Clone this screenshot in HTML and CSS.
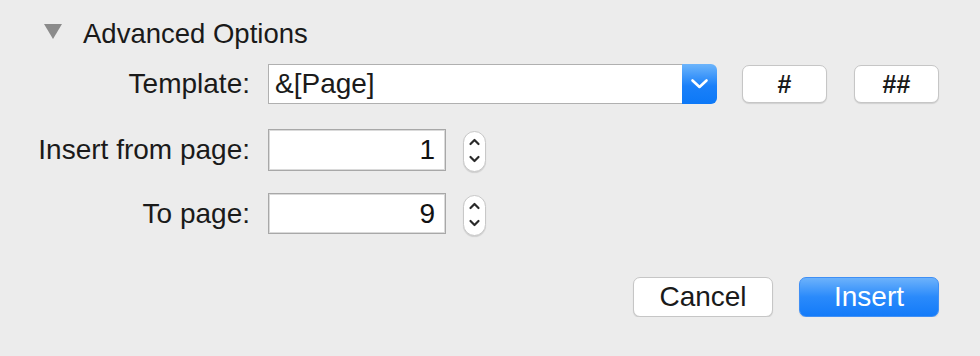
FILE: index.html
```html
<!DOCTYPE html>
<html lang="en">
<head>
    <meta charset="UTF-8" />
    <title>Insert Page Numbers</title>
    <link rel="stylesheet" href="styles.css">
</head>
<body>
    <div class="panel">
        <div class="disclosure">
            <span class="triangle"></span>
            <span class="disclosure-title">Advanced Options</span>
        </div>

        <div class="row row-template">
            <label class="field-label">Template:</label>
            <div class="combo">
                <span class="combo-value">&amp;[Page]</span>
                <span class="combo-arrow">
                    <svg width="35" height="40" viewBox="0 0 35 40"><path d="M10.5 16.5 L17.5 23 L24.5 16.5" fill="none" stroke="#fff" stroke-width="2.6" stroke-linecap="round" stroke-linejoin="round"/></svg>
                </span>
            </div>
            <button class="btn btn-token">#</button>
            <button class="btn btn-token btn-token-last">##</button>
        </div>

        <div class="row row-from">
            <label class="field-label">Insert from page:</label>
            <div class="number-field">1</div>
            <div class="stepper">
                <svg width="23" height="41" viewBox="0 0 23 41"><path d="M7.5 13 L11.5 9 L15.5 13 M7.5 26 L11.5 30 L15.5 26" fill="none" stroke="#2a2a2a" stroke-width="2.2" stroke-linecap="round" stroke-linejoin="round"/></svg>
            </div>
        </div>

        <div class="row row-to">
            <label class="field-label">To page:</label>
            <div class="number-field">9</div>
            <div class="stepper">
                <svg width="23" height="41" viewBox="0 0 23 41"><path d="M7.5 13 L11.5 9 L15.5 13 M7.5 26 L11.5 30 L15.5 26" fill="none" stroke="#2a2a2a" stroke-width="2.2" stroke-linecap="round" stroke-linejoin="round"/></svg>
            </div>
        </div>

        <div class="actions">
            <button class="btn btn-action">Cancel</button>
            <button class="btn btn-action btn-primary">Insert</button>
        </div>
    </div>
</body>
</html>
```

FILE: styles.css
```css
body {
    margin: 0;
    background: #ececec;
    font-family: "Liberation Sans", Arial, sans-serif;
    font-size: 28px;
    color: #1a1a1a;
}
.panel {
    padding: 19px 41px 0 0;
}
.disclosure {
    display: flex;
    align-items: flex-start;
    height: 30px;
    line-height: 30px;
}
.triangle {
    width: 0;
    height: 0;
    margin: 5px 0 0 44px;
    border-left: 9px solid transparent;
    border-right: 9px solid transparent;
    border-top: 15px solid #8b8b8b;
}
.disclosure-title {
    margin-left: 21px;
    font-size: 27.5px;
}
.row {
    display: flex;
    align-items: center;
}
.row-template {
    margin-top: 15px;
    height: 40px;
}
.row-from {
    margin-top: 25px;
    height: 42px;
}
.row-to {
    margin-top: 22px;
    height: 41px;
}
.field-label {
    width: 250px;
    margin-right: 18px;
    text-align: right;
}
.combo {
    display: flex;
    width: 449px;
    height: 40px;
    box-sizing: border-box;
}
.combo-value {
    flex: 1;
    background: #fff;
    border: 1px solid #b0b0b0;
    border-right: none;
    padding-left: 6px;
    line-height: 38px;
}
.combo-arrow {
    width: 35px;
    height: 40px;
    border-radius: 0 6px 6px 0;
    background: linear-gradient(#6db5fb, #1a80f9 55%, #0c78f7);
}
.combo-arrow svg {
    display: block;
}
.btn {
    font-family: inherit;
    font-size: 28px;
    color: #1a1a1a;
    background: #fff;
    border: 1px solid #c6c6c6;
    border-radius: 7px;
    box-shadow: 0 1px 1px rgba(0,0,0,0.12);
    padding: 0;
}
.btn-token {
    width: 85px;
    height: 38px;
    margin-left: 25px;
    font-weight: bold;
    font-size: 25px;
}
.btn-token-last {
    margin-left: 27px;
}
.number-field {
    width: 178px;
    height: 100%;
    box-sizing: border-box;
    background: #fff;
    border: 1px solid #a8a8a8;
    box-shadow: inset 0 0 0 1px #dadada;
    text-align: right;
    padding-right: 10px;
    line-height: 40px;
    color: #111;
}
.stepper {
    width: 23px;
    height: 41px;
    margin-left: 17px;
    margin-top: 3px;
    box-sizing: border-box;
    background: #fff;
    border: 1px solid #c8c8c8;
    border-radius: 12px;
    box-shadow: 0 1px 1px rgba(0,0,0,0.12);
    overflow: hidden;
}
.stepper svg {
    display: block;
    margin: -1px;
}
.actions {
    display: flex;
    justify-content: flex-end;
    gap: 26px;
    margin-top: 43px;
}
.btn-action {
    width: 140px;
    height: 40px;
}
.btn-primary {
    color: #fff;
    border-color: #3f8ff5;
    background: linear-gradient(#6cb2fb, #2a8afb 50%, #137bf9);
}
```
